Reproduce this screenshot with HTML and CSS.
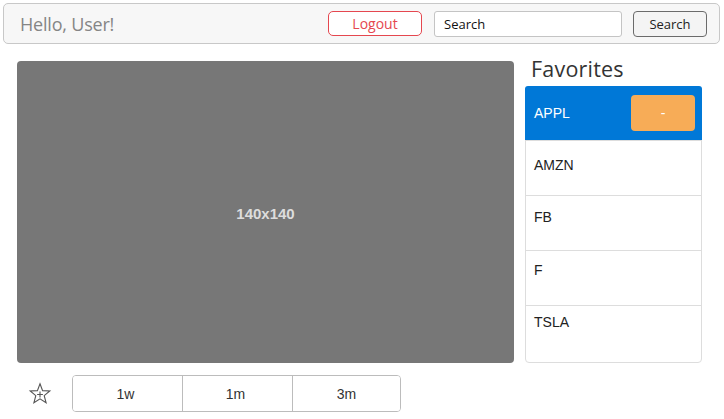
FILE: index.html
```html
<!DOCTYPE html>
<html>
<head>
<meta charset="utf-8">
<link rel="stylesheet" href="styles.css">
</head>
<body>
<nav class="navbar">
  <span class="greeting">Hello, User!</span>
  <div class="nav-right">
    <button class="btn-logout">Logout</button>
    <input class="search-input" type="text" value="Search">
    <button class="btn-search">Search</button>
  </div>
</nav>
<main class="main">
  <section class="left">
    <div class="placeholder">140x140</div>
    <div class="controls">
      <span class="star">
        <svg width="24" height="24" viewBox="0 0 24 24" fill="none" stroke="#555" stroke-width="1.1" stroke-linejoin="miter">
          <path d="M12 1.8 L14.6 8.6 L21.8 9 L16.2 13.6 L18.1 20.8 L12 16.8 L5.9 20.8 L7.8 13.6 L2.2 9 L9.4 8.6 Z"/>
          <path d="M12 9.6 V15.4 M9.1 12.5 H14.9"/>
        </svg>
      </span>
      <div class="range-group">
        <button class="range">1w</button>
        <button class="range">1m</button>
        <button class="range">3m</button>
      </div>
    </div>
  </section>
  <aside class="right">
    <h2 class="fav-title">Favorites</h2>
    <ul class="fav-list">
      <li class="fav-item active"><span>APPL</span><button class="btn-remove">-</button></li>
      <li class="fav-item r2"><span>AMZN</span></li>
      <li class="fav-item r3"><span>FB</span></li>
      <li class="fav-item r4"><span>F</span></li>
      <li class="fav-item r5"><span>TSLA</span></li>
    </ul>
  </aside>
</main>
</body>
</html>
```
FILE: styles.css
```css
* { box-sizing: border-box; }
body {
  margin: 0;
  background: #fff;
  font-family: "Liberation Sans", Arial, sans-serif;
}
.navbar {
  margin: 3px 4px 0 3px;
  height: 41px;
  border: 1px solid #c8c8c8;
  border-radius: 5px;
  background: #f7f7f7;
  display: flex;
  align-items: center;
  justify-content: space-between;
  padding: 0 12px 0 16px;
}
.greeting {
  font-family: "Open Sans", "Noto Sans", sans-serif;
  font-size: 18px;
  color: #858585;
  letter-spacing: -0.2px;
}
.nav-right {
  display: flex;
  align-items: center;
}
.btn-logout {
  width: 94px;
  height: 25px;
  border: 1px solid #e5474f;
  border-radius: 5px;
  background: #fff;
  color: #e5474f;
  font-family: "Open Sans", "Noto Sans", sans-serif;
  font-size: 14px;
  padding: 0;
  margin-right: 12px;
}
.search-input {
  width: 188px;
  height: 26px;
  border: 1px solid #c4c4c4;
  border-radius: 3px;
  background: #fff;
  font-family: "Open Sans", "Noto Sans", sans-serif;
  font-size: 13px;
  color: #111;
  padding: 0 9px;
  margin-right: 11px;
}
.btn-search {
  width: 74px;
  height: 26px;
  border: 1px solid #6b6b6b;
  border-radius: 4px;
  background: #f4f4f4;
  color: #222;
  font-family: "Open Sans", "Noto Sans", sans-serif;
  font-size: 13px;
  padding: 0;
}
.main {
  display: flex;
  gap: 11px;
  padding: 17px 0 0 17px;
}
.left {
  width: 497px;
}
.placeholder {
  height: 302px;
  background: #777;
  border-radius: 4px;
  display: flex;
  align-items: center;
  justify-content: center;
  padding-top: 3px;
  color: #ddd;
  font-weight: bold;
  font-size: 15px;
  font-family: "Liberation Sans", Arial, sans-serif;
}
.controls {
  display: flex;
  align-items: center;
  margin-top: 12px;
}
.star {
  width: 24px;
  height: 24px;
  margin: 0 20px 0 11px;
  display: flex;
}
.range-group {
  display: flex;
  border: 1px solid #bcbcbc;
  border-radius: 4px;
  overflow: hidden;
  height: 37px;
}
.range {
  width: 110px;
  border: none;
  border-right: 1px solid #bcbcbc;
  background: #fff;
  font-family: "Liberation Sans", Arial, sans-serif;
  font-size: 14px;
  color: #333;
  padding: 0 4px 0 0;
}
.range:last-child { border-right: none; width: 107px; padding: 0; }
.right {
  width: 177px;
}
.fav-title {
  margin: -6px 0 2px 6px;
  height: 29px;
  font-family: "Open Sans", "Noto Sans", sans-serif;
  font-weight: normal;
  font-size: 21.5px;
  color: #333;
  line-height: 28px;
  letter-spacing: 0.2px;
}
.fav-list {
  list-style: none;
  margin: 0;
  padding: 0;
  border: 1px solid #ddd;
  border-radius: 4px;
  height: 277px;
  display: flex;
  flex-direction: column;
}
.fav-item {
  height: 55px;
  border-top: 1px solid #ddd;
  padding: 16px 8px 0 8px;
  font-size: 14px;
  color: #222;
  line-height: 17px;
}
.fav-item.active {
  border-top: none;
  margin: -1px -1px 0 -1px;
  height: 54px;
  background: #0078d7;
  color: #fff;
  display: flex;
  align-items: center;
  justify-content: space-between;
  padding: 0 7px 0 9px;
  border-radius: 3px 3px 0 0;
}
.fav-item.r2 { padding-top: 16px; }
.fav-item.r3 { padding-top: 13px; }
.fav-item.r4 { padding-top: 11px; }
.fav-item.r5 { padding-top: 8px; flex: 1; }
.btn-remove {
  width: 64px;
  height: 36px;
  border: none;
  border-radius: 4px;
  background: #f7ac57;
  color: #fff;
  font-size: 14px;
  padding: 0;
}
```
